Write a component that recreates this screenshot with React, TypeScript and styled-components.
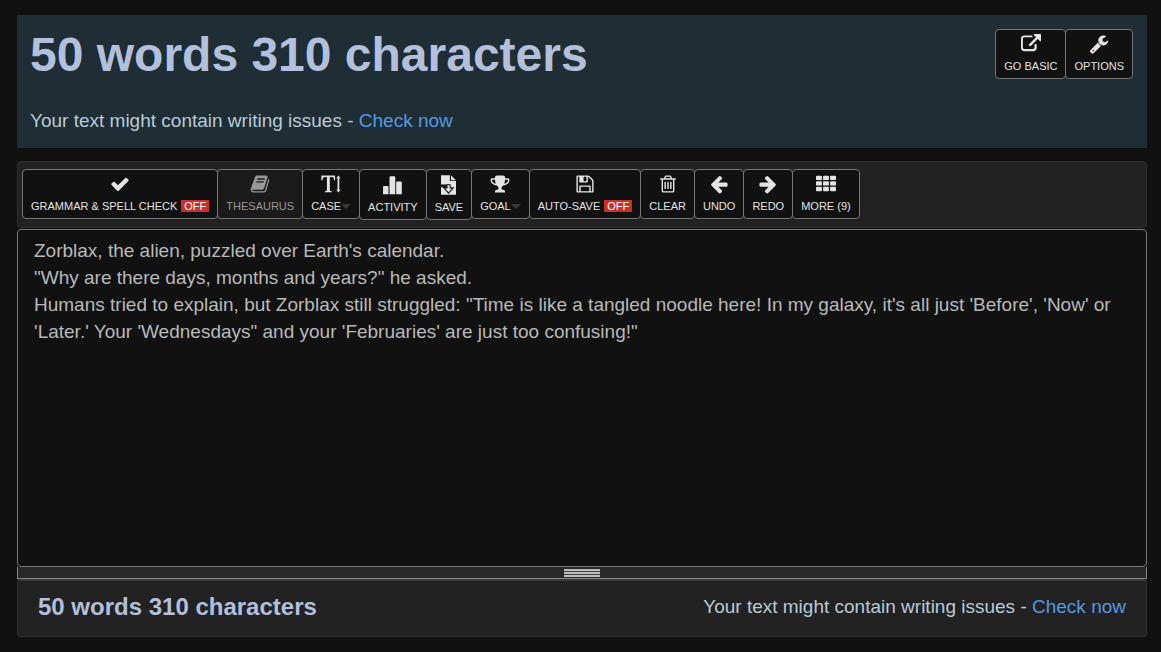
import React from "react";
import styled, { createGlobalStyle } from "styled-components";

const GlobalStyle = createGlobalStyle`
  * { box-sizing: border-box; }
  body {
    margin: 0;
    background: #111;
    color: #b3c8dd;
    font-family: "Liberation Sans", Arial, sans-serif;
    font-size: 19px;
  }
`;

const Page = styled.main`
  padding: 15px 14px 15px 17px;
`;

const Header = styled.header`
  display: flex;
  justify-content: space-between;
  align-items: flex-start;
  padding: 14px 14px 14px 13px;
  margin-bottom: 13px;
  background: #1f2d35;
`;

const Title = styled.h1`
  margin: 0 0 27px;
  color: #b2c0dc;
  font-size: 48px;
  line-height: 52px;
`;

const Notice = styled.p`
  margin: 0;
  color: #b8cbd8;
  font-size: 19px;
  line-height: 26px;
`;

const CheckLink = styled.a`
  color: #5699e0;
  text-decoration: none;
`;

const ButtonGroup = styled.div`
  display: flex;
  align-items: flex-start;
`;

const ToolButton = styled.button`
  display: flex;
  flex-direction: column;
  align-items: center;
  padding: 4px 8px 5px;
  border: 1px solid #777;
  border-radius: 4px;
  background: #111;
  color: #e4e4e4;
  font-family: inherit;
  font-size: 11px;
  line-height: 14px;
  white-space: nowrap;
  cursor: pointer;

  & + & { margin-left: -1px; }
  &:disabled { background: #1a1a1a; color: #989898; cursor: default; }
`;

const Icon = styled.svg<{ $tall?: boolean }>`
  width: ${(p) => (p.$tall ? 21 : 20)}px;
  height: ${(p) => (p.$tall ? 21 : 20)}px;
  margin-bottom: 5px;
  fill: currentColor;
  fill-rule: evenodd;
`;

const Label = styled.span`
  display: flex;
  align-items: center;
`;

const OffBadge = styled.span`
  margin-left: 4px;
  padding: 0 3px;
  background: #c9302c;
  color: #fff;
  line-height: 12px;
`;

const Caret = styled.span`
  border: 5px solid transparent;
  border-top-color: #383838;
  border-bottom: 0;
`;

const Toolbar = styled.nav`
  padding: 7px 4px;
  min-height: 67px;
  margin-bottom: 1px;
  border: 1px solid #2e2e2e;
  border-radius: 4px;
  background: #222;
`;

const Editor = styled.textarea`
  display: block;
  width: 100%;
  height: 338px;
  padding: 7px 15px 7px 16px;
  border: 1px solid #777;
  border-radius: 4px;
  background: #111;
  color: #b9b9b9;
  font-family: inherit;
  font-size: 19px;
  line-height: 27px;
  resize: none;
  outline: none;
`;

const Grip = styled.div`
  display: flex;
  justify-content: center;
  align-items: flex-end;
  height: 12px;
  padding-bottom: 1px;
  border: 1px solid #888;
  border-top: 0;
  background: #282828;
`;

const Footer = styled.footer`
  display: flex;
  justify-content: space-between;
  align-items: center;
  height: 58px;
  padding: 0 20px 4px;
  border: 1px solid #303030;
  border-top: 2px solid #383838;
  border-radius: 4px;
  background: #222;
`;

const Total = styled.h2`
  margin: 0;
  color: #b2c0dc;
  font-size: 24px;
  line-height: 26px;
`;

const icons = {
  external: "M1408 928v320q0 119-84.5 203.5t-203.5 84.5h-832q-119 0-203.5-84.5t-84.5-203.5v-832q0-119 84.5-203.5t203.5-84.5h704q14 0 23 9t9 23v110q0 14-9 23t-23 9h-704q-50 0-85 35t-35 85v800q0 50 35 85t85 35h800q50 0 85-35t35-85v-288q0-14 9-23t23-9h110q14 0 23 9t9 23zm384-864v512q0 26-19 45t-45 19-45-19l-176-176-652 652q-10 10-23 10t-23-10l-114-114q-10-10-10-23t10-23l652-652-176-176q-19-19-19-45t19-45 45-19h512q26 0 45 19t19 45z",
  wrench: "M448 1472q0-26-19-45t-45-19-45 19-19 45 19 45 45 19 45-19 19-45zm644-420l-682 682q-37 37-90 37-52 0-91-37l-106-108q-38-36-38-90 0-53 38-91l681-681q39 98 114.5 173.5t173.5 114.5zm634-435q0 39-23 106-47 134-164.5 217.5t-258.5 83.5q-185 0-316.5-131.5t-131.5-316.5 131.5-316.5 316.5-131.5q58 0 121.5 16.5t107.5 46.5q16 11 16 28t-16 28l-293 169v224l193 107q5-3 79-48.5t135.5-81 70.5-35.5q15 0 23.5 10t8.5 25z",
  check: "M1671 566q0 40-28 68l-724 724-136 136q-28 28-68 28t-68-28l-136-136-362-362q-28-28-28-68t28-68l136-136q28-28 68-28t68 28l294 295 656-657q28-28 68-28t68 28l136 136q28 28 28 68z",
  book: "M1703 478q40 57 18 129l-275 906q-19 64-76.5 107.5t-122.5 43.5h-923q-77 0-148.5-53.5t-99.5-131.5q-24-67-2-127 0-4 3-27t4-37q1-8-3-21.5t-3-19.5q2-11 8-21t16.5-23.5 16.5-23.5q23-38 45-91.5t30-91.5q3-10 .5-30t-.5-28q3-11 17-28t17-23q21-36 42-92t25-90q1-9-2.5-32t.5-28q4-13 22-30.5t22-22.5q19-26 42.5-84.5t27.5-96.5q1-8-3-25.5t-2-26.5q2-8 9-18t18-23 17-21q8-12 16.5-30.5t15-35 16-36 19.5-32 26.5-23.5 36-11.5 47.5 5.5l-1 3q38-9 51-9h761q74 0 114 56t18 130l-274 906q-36 119-71.5 153.5t-128.5 34.5h-869q-27 0-38 15-11 16-1 43 24 70 144 70h923q29 0 56-15.5t35-41.5l300-987q7-22 5-57 38 15 59 43zm-1064 2q-4 13 2 22.5t20 9.5h608q13 0 25.5-9.5t16.5-22.5l21-64q4-13-2-22.5t-20-9.5h-608q-13 0-25.5 9.5t-16.5 22.5zm-83 256q-4 13 2 22.5t20 9.5h608q13 0 25.5-9.5t16.5-22.5l21-64q4-13-2-22.5t-20-9.5h-608q-13 0-25.5 9.5t-16.5 22.5z",
  textHeight: "M40 130h1210l20 430h-90q-30-200-90-260-50-40-300-40v1150q0 90 50 110l140 40v70H330v-70l140-40q60-20 60-110V260q-240 0-300 40-70 60-100 260H20zM1560 130l190 260h-110v1010h110l-190 260-190-260h110V390h-110z",
  chart: "M90 1090q0-70 70-70h320q70 0 70 70v630H90zM640 270q0-70 70-70h350q70 0 70 70v1450H640zM1210 700q0-70 70-70h340q70 0 70 70v1020h-480z",
  download: "M256 100h760v500h520v1180H256zM1110 100l426 426h-426zM720 880h360v240h330L900 1700 390 1120H256V900h464zM810 960h180v270h210L900 1560 600 1230h210z",
  trophy: "M522 883q-74-162-74-371h-256v96q0 78 94.5 162t235.5 113zm1078-275v-96h-256q0 209-74 371 141-29 235.5-113t94.5-162zm128-128v128q0 71-41.5 143t-112 130-173 97.5-215.5 44.5q-42 54-95 95-38 34-52.5 72.5t-14.5 89.5q0 54 30.5 91t97.5 37q75 0 133.5 45.5t58.5 114.5v64q0 14-9 23t-23 9h-832q-14 0-23-9t-9-23v-64q0-69 58.5-114.5t133.5-45.5q67 0 97.5-37t30.5-91q0-51-14.5-89.5t-52.5-72.5q-53-41-95-95-113-5-215.5-44.5t-173-97.5-112-130-41.5-143v-128q0-40 28-68t68-28h288v-96q0-66 47-113t113-47h576q66 0 113 47t47 113v96h288q40 0 68 28t28 68z",
  floppy: "M512 1536h768v-384h-768v384zm896 0h128v-896q0-14-10-38.5t-20-34.5l-281-281q-10-10-34-20t-39-10v416q0 40-28 68t-68 28h-576q-40 0-68-28t-28-68v-416h-128v1280h128v-416q0-40 28-68t68-28h832q40 0 68 28t28 68v416zm-384-928v-320q0-13-9.5-22.5t-22.5-9.5h-192q-13 0-22.5 9.5t-9.5 22.5v320q0 13 9.5 22.5t22.5 9.5h192q13 0 22.5-9.5t9.5-22.5zm640 32v928q0 40-28 68t-68 28h-1344q-40 0-68-28t-28-68v-1344q0-40 28-68t68-28h928q40 0 88 20t76 48l280 280q28 28 48 76t20 88z",
  trash: "M704 736v576q0 14-9 23t-23 9h-64q-14 0-23-9t-9-23v-576q0-14 9-23t23-9h64q14 0 23 9t9 23zm256 0v576q0 14-9 23t-23 9h-64q-14 0-23-9t-9-23v-576q0-14 9-23t23-9h64q14 0 23 9t9 23zm256 0v576q0 14-9 23t-23 9h-64q-14 0-23-9t-9-23v-576q0-14 9-23t23-9h64q14 0 23 9t9 23zm128 724v-948h-896v948q0 22 7 40.5t14.5 27 10.5 8.5h832q3 0 10.5-8.5t14.5-27 7-40.5zm-672-1076h448l-48-117q-7-9-17-11h-317q-10 2-17 11zm928 32v64q0 14-9 23t-23 9h-96v948q0 83-47 143.5t-113 60.5h-832q-66 0-113-58.5t-47-141.5v-952h-96q-14 0-23-9t-9-23v-64q0-14 9-23t23-9h309l70-167q15-37 54-63t79-26h320q40 0 79 26t54 63l70 167h309q14 0 23 9t9 23z",
  left: "M1664 896v128q0 53-32.5 90.5t-84.5 37.5h-704l293 294q38 36 38 90t-38 90l-75 76q-37 37-90 37-52 0-91-37l-651-652q-37-37-37-90 0-52 37-91l651-650q38-38 91-38 52 0 90 38l75 74q38 38 38 91t-38 91l-293 293h704q52 0 84.5 37.5t32.5 90.5z",
  right: "M128 896v128q0 53 32.5 90.5t84.5 37.5h704l-293 294q-38 36-38 90t38 90l75 76q37 37 90 37 52 0 91-37l651-652q37-37 37-90 0-52-37-91l-651-650q-38-38-91-38-52 0-90 38l-75 74q-38 38-38 91t38 91l293 293h-704q-52 0-84.5 37.5t-32.5 90.5z",
  grid: [150, 650, 1150]
    .map((y) => [0, 630, 1260].map((x) => `M${x + 80} ${y}h370q80 0 80 80v230q0 80-80 80h-370q-80 0-80-80v-230q0-80 80-80z`).join(""))
    .join(""),
};

type Tool = {
  icon: keyof typeof icons;
  label: string;
  off?: boolean;
  menu?: boolean;
  disabled?: boolean;
  tall?: boolean;
};

const tools: Tool[] = [
  { icon: "check", label: "GRAMMAR & SPELL CHECK", off: true },
  { icon: "book", label: "THESAURUS", disabled: true },
  { icon: "textHeight", label: "CASE", menu: true },
  { icon: "chart", label: "ACTIVITY", tall: true },
  { icon: "download", label: "SAVE", tall: true },
  { icon: "trophy", label: "GOAL", menu: true },
  { icon: "floppy", label: "AUTO-SAVE", off: true },
  { icon: "trash", label: "CLEAR" },
  { icon: "left", label: "UNDO" },
  { icon: "right", label: "REDO" },
  { icon: "grid", label: "MORE (9)" },
];

const story = `Zorblax, the alien, puzzled over Earth's calendar.
"Why are there days, months and years?" he asked.
Humans tried to explain, but Zorblax still struggled: "Time is like a tangled noodle here! In my galaxy, it's all just 'Before', 'Now' or 'Later.' Your 'Wednesdays" and your 'Februaries' are just too confusing!"`;

const ToolItem = ({ icon, label, off, menu, disabled, tall }: Tool) => (
  <ToolButton type="button" disabled={disabled}>
    <Icon viewBox="0 0 1792 1792" aria-hidden="true" $tall={tall}>
      <path d={icons[icon]} />
    </Icon>
    <Label>
      {label}
      {off && <OffBadge>OFF</OffBadge>}
      {menu && <Caret />}
    </Label>
  </ToolButton>
);

const WritingNotice = () => (
  <Notice>
    Your text might contain writing issues - <CheckLink href="#check">Check now</CheckLink>
  </Notice>
);

export default function App() {
  return (
    <>
      <GlobalStyle />
      <Page>
        <Header>
          <div>
            <Title>50 words 310 characters</Title>
            <WritingNotice />
          </div>
          <ButtonGroup>
            <ToolItem icon="external" label="GO BASIC" />
            <ToolItem icon="wrench" label="OPTIONS" />
          </ButtonGroup>
        </Header>
        <Toolbar aria-label="Writing tools">
          <ButtonGroup>
            {tools.map((tool) => (
              <ToolItem key={tool.label} {...tool} />
            ))}
          </ButtonGroup>
        </Toolbar>
        <Editor aria-label="Your text" defaultValue={story} spellCheck={false} />
        <Grip>
          <svg width="36" height="8" aria-hidden="true">
            <path d="M0 4h36M0 1h36M0 7h36" stroke="#bbb" strokeWidth="2" />
            <path d="M0 2.5h36M0 5.5h36" stroke="#444" />
          </svg>
        </Grip>
        <Footer>
          <Total>50 words 310 characters</Total>
          <WritingNotice />
        </Footer>
      </Page>
    </>
  );
}
